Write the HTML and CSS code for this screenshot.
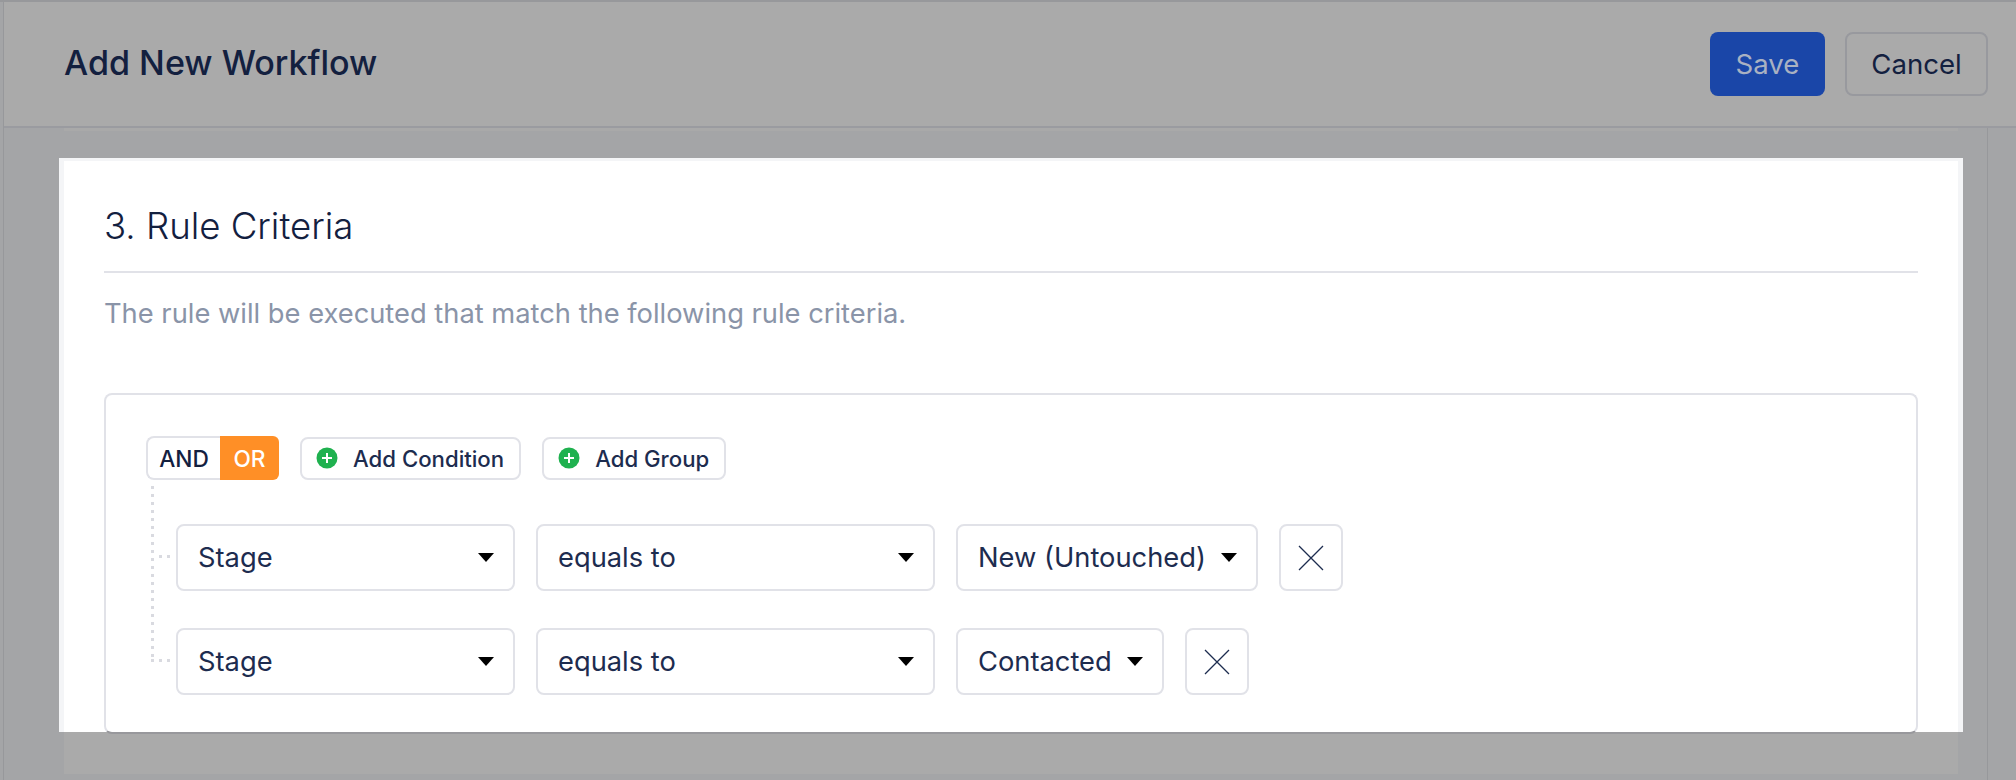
FILE: index.html
```html
<!DOCTYPE html>
<html lang="en">
<head>
    <meta charset="UTF-8">
    <meta name="viewport" content="width=device-width, initial-scale=1.0">
    <title>Add New Workflow</title>
    <link rel="stylesheet" href="styles.css">
</head>
<body>

    <div class="page">
        <header class="topbar">
            <h1>Add New Workflow</h1>
            <div class="actions">
                <button class="btn-save" type="button">Save</button>
                <button class="btn-cancel" type="button">Cancel</button>
            </div>
        </header>
        <div class="panel"></div>
    </div>

    <div class="modal">
        <div class="modal-inner">
            <h2>3. Rule Criteria</h2>
            <p class="hint">The rule will be executed that match the following rule criteria.</p>

            <div class="criteria">
                <div class="toolbar">
                    <div class="logic">
                        <span class="logic-and">AND</span>
                        <span class="logic-or">OR</span>
                    </div>
                    <button class="btn-add" type="button">
                        <svg viewBox="0 0 22 22" width="22" height="22"><circle cx="11" cy="11" r="10.5" fill="#1fb14f"/><path d="M11 6v10M6 11h10" stroke="#fff" stroke-width="2"/></svg>
                        Add Condition
                    </button>
                    <button class="btn-add" type="button">
                        <svg viewBox="0 0 22 22" width="22" height="22"><circle cx="11" cy="11" r="10.5" fill="#1fb14f"/><path d="M11 6v10M6 11h10" stroke="#fff" stroke-width="2"/></svg>
                        Add Group
                    </button>
                </div>

                <div class="rows">
                    <div class="row">
                        <div class="select select-field">Stage<span class="caret"></span></div>
                        <div class="select select-op">equals to<span class="caret"></span></div>
                        <div class="select select-value">New (Untouched)<span class="caret"></span></div>
                        <button class="btn-remove" type="button">
                            <svg viewBox="0 0 26 26" width="26" height="26"><path d="M1 1l24 24M25 1L1 25" stroke="#1d2c4f" stroke-width="1.3" fill="none"/></svg>
                        </button>
                    </div>
                    <div class="row">
                        <div class="select select-field">Stage<span class="caret"></span></div>
                        <div class="select select-op">equals to<span class="caret"></span></div>
                        <div class="select select-value">Contacted<span class="caret"></span></div>
                        <button class="btn-remove" type="button">
                            <svg viewBox="0 0 26 26" width="26" height="26"><path d="M1 1l24 24M25 1L1 25" stroke="#1d2c4f" stroke-width="1.3" fill="none"/></svg>
                        </button>
                    </div>
                </div>
            </div>
        </div>
    </div>

</body>
</html>
```

FILE: styles.css
```css
* {
    box-sizing: border-box;
}

html, body {
    height: 100%;
}

body {
    font-family: Inter, "Liberation Sans", sans-serif;
    background-color: #a4a5a7;
    color: #13203f;
    margin: 0;
    overflow: hidden;
}

.page {
    height: 780px;
    padding-left: 3px;
    border-top: 2px solid #97989b;
    position: relative;
}

/* thin frame lines of the page behind the overlay */
.page::before {
    content: "";
    position: absolute;
    top: 0;
    bottom: 0;
    left: 3px;
    width: 1px;
    background-color: #97989b;
}

.page::after {
    content: "";
    position: absolute;
    top: 126px;
    bottom: 0;
    left: 1987px;
    width: 1px;
    background-color: #97989b;
}

.topbar {
    height: 126px;
    margin-left: 1px;
    padding: 0 28px 0 60px;
    background-color: #aaaaaa;
    border-bottom: 2px solid #9a9ba0;
    display: flex;
    align-items: center;
    justify-content: space-between;
}

.topbar h1 {
    margin: 0 0 4px;
    font-size: 34.1px;
    font-weight: 500;
    color: #13203f;
}

.actions {
    display: flex;
    gap: 20px;
}

.actions button {
    height: 64px;
    border-radius: 8px;
    font-family: inherit;
    font-size: 27.6px;
}

.btn-save {
    width: 115px;
    background-color: #1a46a8;
    color: #a9b1c2;
    border: none;
}

.btn-cancel {
    width: 143px;
    background-color: #aaaaaa;
    color: #13203f;
    border: 2px solid #98999e;
}

.panel {
    width: 1894px;
    height: 646px;
    margin-left: 61px;
    background: linear-gradient(to bottom, #a9a9a9 3px, #a4a5a7 3px, #a4a5a7 604px, #aaaaaa 604px);
}

.modal {
    position: absolute;
    top: 158px;
    left: 59px;
    width: 1904px;
    height: 574px;
    padding: 3px 5px 0;
    background-color: #f4f5f7;
}

.modal-inner {
    height: 100%;
    padding: 40px 40px 0;
    background-color: #ffffff;
}

.modal-inner h2 {
    margin: 0;
    height: 72px;
    padding-top: 3px;
    font-size: 36.6px;
    font-weight: 300;
    color: #13203f;
    border-bottom: 2px solid #e1e2e8;
}

.hint {
    margin: 24px 0 0;
    font-size: 27.3px;
    color: #8a94a8;
}

.criteria {
    margin-top: 63px;
    height: 341px;
    padding: 41px 40px 0;
    border: 2px solid #e1e2e8;
    border-bottom-color: #98989c;
    border-radius: 8px;
}

.toolbar {
    display: flex;
    align-items: center;
    gap: 21px;
}

.logic {
    display: flex;
    height: 44px;
    font-size: 22.7px;
    font-weight: 500;
}

.logic span {
    display: flex;
    align-items: center;
    justify-content: center;
}

.logic-and {
    width: 74px;
    border: 2px solid #e1e2e8;
    border-right: none;
    border-radius: 8px 0 0 8px;
}

.logic-or {
    width: 59px;
    background-color: #ff8f26;
    color: #ffffff;
    border-radius: 0 6px 6px 0;
}

.btn-add {
    height: 43px;
    padding: 0 15px 0 14px;
    background-color: #ffffff;
    border: 2px solid #e1e2e8;
    border-radius: 8px;
    display: flex;
    align-items: center;
    gap: 15px;
    font-family: inherit;
    font-size: 22.2px;
    font-weight: 500;
    color: #1d2c4f;
}

.rows {
    margin: 44px 0 0 30px;
    display: flex;
    flex-direction: column;
    gap: 37px;
}

.row {
    display: flex;
    gap: 21px;
    position: relative;
}

/* dotted tree lines on the left of the rows */
.row::before {
    content: "";
    position: absolute;
    left: -25px;
    top: -38px;
    width: 3px;
    height: 75px;
    background: repeating-linear-gradient(to bottom, #d9dae0 0, #d9dae0 3px, transparent 3px, transparent 8px);
}

.row + .row::before {
    top: -62px;
    height: 91px;
}

.row::after {
    content: "";
    position: absolute;
    left: -17px;
    top: 31px;
    width: 11px;
    height: 3px;
    background: repeating-linear-gradient(to right, #d9dae0 0, #d9dae0 3px, transparent 3px, transparent 8px);
}

.row + .row::after {
    left: -25px;
    width: 19px;
}

.select {
    height: 67px;
    padding: 0 19px 0 20px;
    border: 2px solid #e1e2e8;
    border-radius: 8px;
    display: flex;
    align-items: center;
    justify-content: space-between;
    font-size: 27.3px;
    color: #1d2c4f;
}

.select-field {
    width: 339px;
}

.select-op {
    width: 399px;
}

.select-value {
    gap: 15px;
}

.caret {
    width: 0;
    height: 0;
    border-left: 8px solid transparent;
    border-right: 8px solid transparent;
    border-top: 9px solid #000000;
}

.btn-remove {
    width: 64px;
    height: 67px;
    padding: 0;
    background-color: #ffffff;
    border: 2px solid #e1e2e8;
    border-radius: 8px;
    display: flex;
    align-items: center;
    justify-content: center;
}
```
